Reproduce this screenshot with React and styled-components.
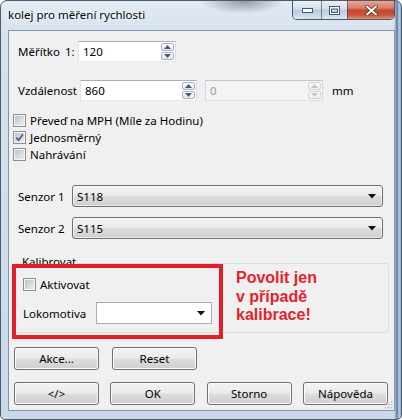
import React from 'react';
import styled, { createGlobalStyle } from 'styled-components';

const GlobalStyle = createGlobalStyle`
  html, body { margin: 0; padding: 0; background: #ffffff; }
  body {
    font-family: "Noto Sans", "Open Sans", "DejaVu Sans", sans-serif;
    font-size: 11.5px;
    color: #000;
  }
  * { box-sizing: border-box; }
`;

/* ---------- window chrome ---------- */

const Window = styled.div`
  width: 402px;
  height: 420px;
  display: flex;
  flex-direction: column;
  border: 1px solid #4f5a68;
  border-radius: 7px 7px 5px 5px;
  overflow: hidden;
  background:
    radial-gradient(ellipse 42px 13px at 242px 0px, rgba(78, 88, 100, 0.55), rgba(78, 88, 100, 0) 100%),
    linear-gradient(to right, rgba(0,0,0,0) 393px, #a9c4e2 394px, #5f7696 396px, #b7cfe9 398px, #8fa9c8 400px),
    linear-gradient(#e3ebf4 0px, #d5e1ee 36px, #cad9ea 100%);
`;

const TitleBar = styled.div`
  flex: none;
  height: 29px;
  display: flex;
  align-items: flex-start;
  padding-left: 7px;
`;

const Title = styled.span`
  margin-top: 5px;
  line-height: 17px;
  font-size: 11.5px;
  text-shadow: 0 0 6px #ffffff, 0 0 3px #ffffff;
`;

const Captions = styled.div`
  margin-left: auto;
  margin-right: 6px;
  height: 19px;
  display: flex;
  border: 1px solid rgba(42, 52, 68, 0.8);
  border-top: none;
  border-radius: 0 0 5px 5px;
  overflow: hidden;
`;

const CaptionButton = styled.div`
  width: ${p => p.$w}px;
  display: flex;
  align-items: center;
  justify-content: center;
  background: ${p => p.$close
    ? 'linear-gradient(#e9a898 0%, #d77c68 40%, #c4472c 52%, #c8553a 78%, #e0947a 100%)'
    : 'linear-gradient(#eaf0f7 0%, #d6e1ee 42%, #bccde1 52%, #c9d8ea 80%, #dbe6f2 100%)'};
  & + & { border-left: 1px solid rgba(42, 52, 68, 0.55); }
`;

/* ---------- client area ---------- */

const Client = styled.div`
  flex: 1;
  margin: 0 6px 8px 7px;
  border: 1px solid #8495a9;
  background: #f0f0f0;
  position: relative;
  display: flex;
  flex-direction: column;
`;

const Row = styled.div`
  display: flex;
  align-items: center;
  height: ${p => p.$h || 21}px;
  margin: ${p => p.$top || 0}px 0 0 ${p => (p.$left === undefined ? 9 : p.$left)}px;
`;

const Label = styled.span`
  width: ${p => (p.$w ? `${p.$w}px` : 'auto')};
  flex: none;
  white-space: nowrap;
`;

const Unit = styled.span`
  margin-left: 9px;
`;

const SpinField = styled.div`
  width: ${p => p.$w}px;
  height: 21px;
  flex: none;
  display: flex;
  align-items: center;
  padding: 0 1px 0 4px;
  margin-right: ${p => p.$mr || 0}px;
  border: 1px solid;
  border-color: ${p => p.$disabled
    ? '#c2c5c9 #d6d9dd #dcdfe3 #d6d9dd'
    : '#abadb3 #dbdfe6 #e3e9ef #e2e3ea'};
  background: ${p => (p.$disabled ? '#f4f4f4' : '#ffffff')};
  color: ${p => (p.$disabled ? '#9b9b9b' : '#000000')};
`;

const SpinValue = styled.span`
  flex: 1;
`;

const SpinButtons = styled.div`
  display: flex;
  flex-direction: column;
  gap: 1px;
`;

const SpinButton = styled.div`
  width: 13px;
  height: 8px;
  display: flex;
  align-items: center;
  justify-content: center;
  border: 1px solid ${p => (p.$disabled ? '#d2d5d9' : '#a3b1c2')};
  border-radius: 2px;
  background: ${p => (p.$disabled
    ? 'linear-gradient(#f7f7f7, #eeeeee)'
    : 'linear-gradient(#fdfdfd, #e3e8ee)')};
`;

const CheckList = styled.div`
  display: flex;
  flex-direction: column;
  margin: ${p => p.$top || 0}px 0 0 4px;
`;

const CheckRow = styled.div`
  display: flex;
  align-items: center;
  gap: 4px;
  height: 17px;
  white-space: nowrap;
`;

const Box = styled.span`
  width: 13px;
  height: 13px;
  flex: none;
  position: relative;
  border: 1px solid #8e8f8f;
  background: linear-gradient(135deg, #b8bcc1 0%, #d9dbde 55%, #f1f1f1 100%);
  box-shadow: inset 0 0 0 1px #f5f5f5;
`;

const Tick = styled.svg`
  position: absolute;
  left: 1px;
  top: 1px;
`;

const Combo = styled.div`
  width: ${p => p.$w}px;
  height: 22px;
  flex: none;
  display: flex;
  align-items: center;
  padding: 0 6px 0 4px;
  border: 1px solid ${p => (p.$plain ? '#abadb3' : '#707070')};
  border-radius: ${p => (p.$plain ? '0' : '3px')};
  background: ${p => (p.$plain
    ? '#ffffff'
    : 'linear-gradient(#f3f3f3 0%, #ebebeb 48%, #dddddd 52%, #cfcfcf 100%)')};
  box-shadow: ${p => (p.$plain ? 'none' : 'inset 0 0 0 1px rgba(255,255,255,0.55)')};
`;

const ComboText = styled.span`
  flex: 1;
`;

/* ---------- calibration group ---------- */

const GroupBox = styled.div`
  position: relative;
  margin: 24px 5px 0 5px;
  padding: 12px 0 8px 8px;
  border: 1px solid #d5dfe5;
  border-radius: 3px;
  display: flex;
  flex-direction: column;
`;

const GroupTitle = styled.span`
  position: absolute;
  left: 6px;
  top: -11px;
  padding: 0 1px;
  background: #f0f0f0;
  line-height: 17px;
`;

const GroupRow = styled.div`
  display: flex;
  align-items: center;
  height: ${p => p.$h}px;
  margin-top: ${p => p.$top || 0}px;
`;

const Highlight = styled.div`
  position: absolute;
  left: -3px;
  top: 0px;
  width: 211px;
  height: 75px;
  border: 4px solid #e21f28;
`;

const Note = styled.div`
  position: absolute;
  left: 221px;
  top: 5px;
  font-family: "Liberation Sans", Arial, sans-serif;
  font-weight: bold;
  font-size: 16px;
  line-height: 18.5px;
  color: #e2242b;
`;

/* ---------- buttons ---------- */

const ButtonRow = styled.div`
  display: flex;
  gap: ${p => p.$gap || 0}px;
  justify-content: ${p => (p.$spread ? 'space-between' : 'flex-start')};
  margin: ${p => p.$top}px 6px 0 5px;
`;

const Button = styled.button`
  width: 85px;
  height: 23px;
  padding: 0;
  font: inherit;
  color: #000;
  border: 1px solid #707070;
  border-radius: 3px;
  background: linear-gradient(#f3f3f3 0%, #ebebeb 48%, #dddddd 52%, #cfcfcf 100%);
  box-shadow: inset 0 0 0 1px #fbfbfb;
`;

const Grip = styled.svg`
  position: absolute;
  right: 1px;
  bottom: 1px;
`;

/* ---------- small drawings ---------- */

const Arrow = ({ up, color = '#4b5a74' }) => (
  <svg width="7" height="4" viewBox="0 0 7 4">
    <polygon points={up ? '3.5,0 7,4 0,4' : '0,0 7,0 3.5,4'} fill={color} />
  </svg>
);

const DropArrow = () => (
  <svg width="8" height="5" viewBox="0 0 8 5">
    <polygon points="0,0 8,0 4,4.5" fill="#111" />
  </svg>
);

const Spin = ({ w, value, disabled, mr }) => (
  <SpinField $w={w} $disabled={disabled} $mr={mr}>
    <SpinValue>{value}</SpinValue>
    <SpinButtons>
      <SpinButton $disabled={disabled}><Arrow up color={disabled ? '#c4c7cb' : '#4b5a74'} /></SpinButton>
      <SpinButton $disabled={disabled}><Arrow color={disabled ? '#c4c7cb' : '#4b5a74'} /></SpinButton>
    </SpinButtons>
  </SpinField>
);

const Check = ({ checked, children }) => (
  <CheckRow>
    <Box>
      {checked && (
        <Tick width="9" height="9" viewBox="0 0 9 9">
          <path d="M1.2 4.6 L3.6 7.2 L8 1.2" fill="none" stroke="#4a5f8e" strokeWidth="1.7" />
        </Tick>
      )}
    </Box>
    <span>{children}</span>
  </CheckRow>
);

export default function App() {
  return (
    <>
      <GlobalStyle />
      <Window>
        <TitleBar>
          <Title>kolej pro měření rychlosti</Title>
          <Captions>
            <CaptionButton $w={28}>
              <svg width="11" height="5" viewBox="0 0 11 5">
                <rect x="0.5" y="0.5" width="10" height="4" fill="#ffffff" stroke="#4a5567" />
              </svg>
            </CaptionButton>
            <CaptionButton $w={26}>
              <svg width="11" height="9" viewBox="0 0 11 9">
                <rect x="0.5" y="0.5" width="10" height="8" fill="#ffffff" stroke="#4a5567" />
                <rect x="2.5" y="3" width="6" height="3.5" fill="#c9d6e6" stroke="#4a5567" />
              </svg>
            </CaptionButton>
            <CaptionButton $w={47} $close>
              <svg width="13" height="11" viewBox="0 0 13 11">
                <path d="M2 1.5 L11 9.5 M11 1.5 L2 9.5" stroke="#5a2a22" strokeWidth="3.6" strokeLinecap="round" />
                <path d="M2 1.5 L11 9.5 M11 1.5 L2 9.5" stroke="#ffffff" strokeWidth="2" strokeLinecap="round" />
              </svg>
            </CaptionButton>
          </Captions>
        </TitleBar>

        <Client>
          <Row $top={10}>
            <Label $w={47}>Měřítko</Label>
            <Label $w={13}>1:</Label>
            <Spin w={98} value="120" />
          </Row>

          <Row $top={18}>
            <Label $w={62}>Vzdálenost</Label>
            <Spin w={117} value="860" mr={8} />
            <Spin w={118} value="0" disabled />
            <Unit>mm</Unit>
          </Row>

          <CheckList $top={11}>
            <Check>Převeď na MPH (Míle za Hodinu)</Check>
            <Check checked>Jednosměrný</Check>
            <Check>Nahrávání</Check>
          </CheckList>

          <Row $top={22} $h={22}>
            <Label $w={54}>Senzor 1</Label>
            <Combo $w={311}>
              <ComboText>S118</ComboText>
              <DropArrow />
            </Combo>
          </Row>

          <Row $top={10} $h={22}>
            <Label $w={54}>Senzor 2</Label>
            <Combo $w={311}>
              <ComboText>S115</ComboText>
              <DropArrow />
            </Combo>
          </Row>

          <GroupBox>
            <GroupTitle>Kalibrovat</GroupTitle>
            <GroupRow $h={17}>
              <Check>Aktivovat</Check>
            </GroupRow>
            <GroupRow $h={22} $top={9}>
              <Label $w={73}>Lokomotiva</Label>
              <Combo $w={116} $plain>
                <ComboText />
                <DropArrow />
              </Combo>
            </GroupRow>
            <Highlight />
            <Note>
              Povolit jen<br />v případě<br />kalibrace!
            </Note>
          </GroupBox>

          <ButtonRow $top={14} $gap={13}>
            <Button>Akce...</Button>
            <Button>Reset</Button>
          </ButtonRow>

          <ButtonRow $top={12} $spread>
            <Button>&lt;/&gt;</Button>
            <Button>OK</Button>
            <Button>Storno</Button>
            <Button>Nápověda</Button>
          </ButtonRow>

          <Grip width="10" height="10" viewBox="0 0 10 10">
            {[[8, 2], [8, 5], [5, 5], [8, 8], [5, 8], [2, 8]].map(([x, y]) => (
              <rect key={`${x}-${y}`} x={x} y={y} width="1.5" height="1.5" fill="#b4b8bd" />
            ))}
          </Grip>
        </Client>
      </Window>
    </>
  );
}
